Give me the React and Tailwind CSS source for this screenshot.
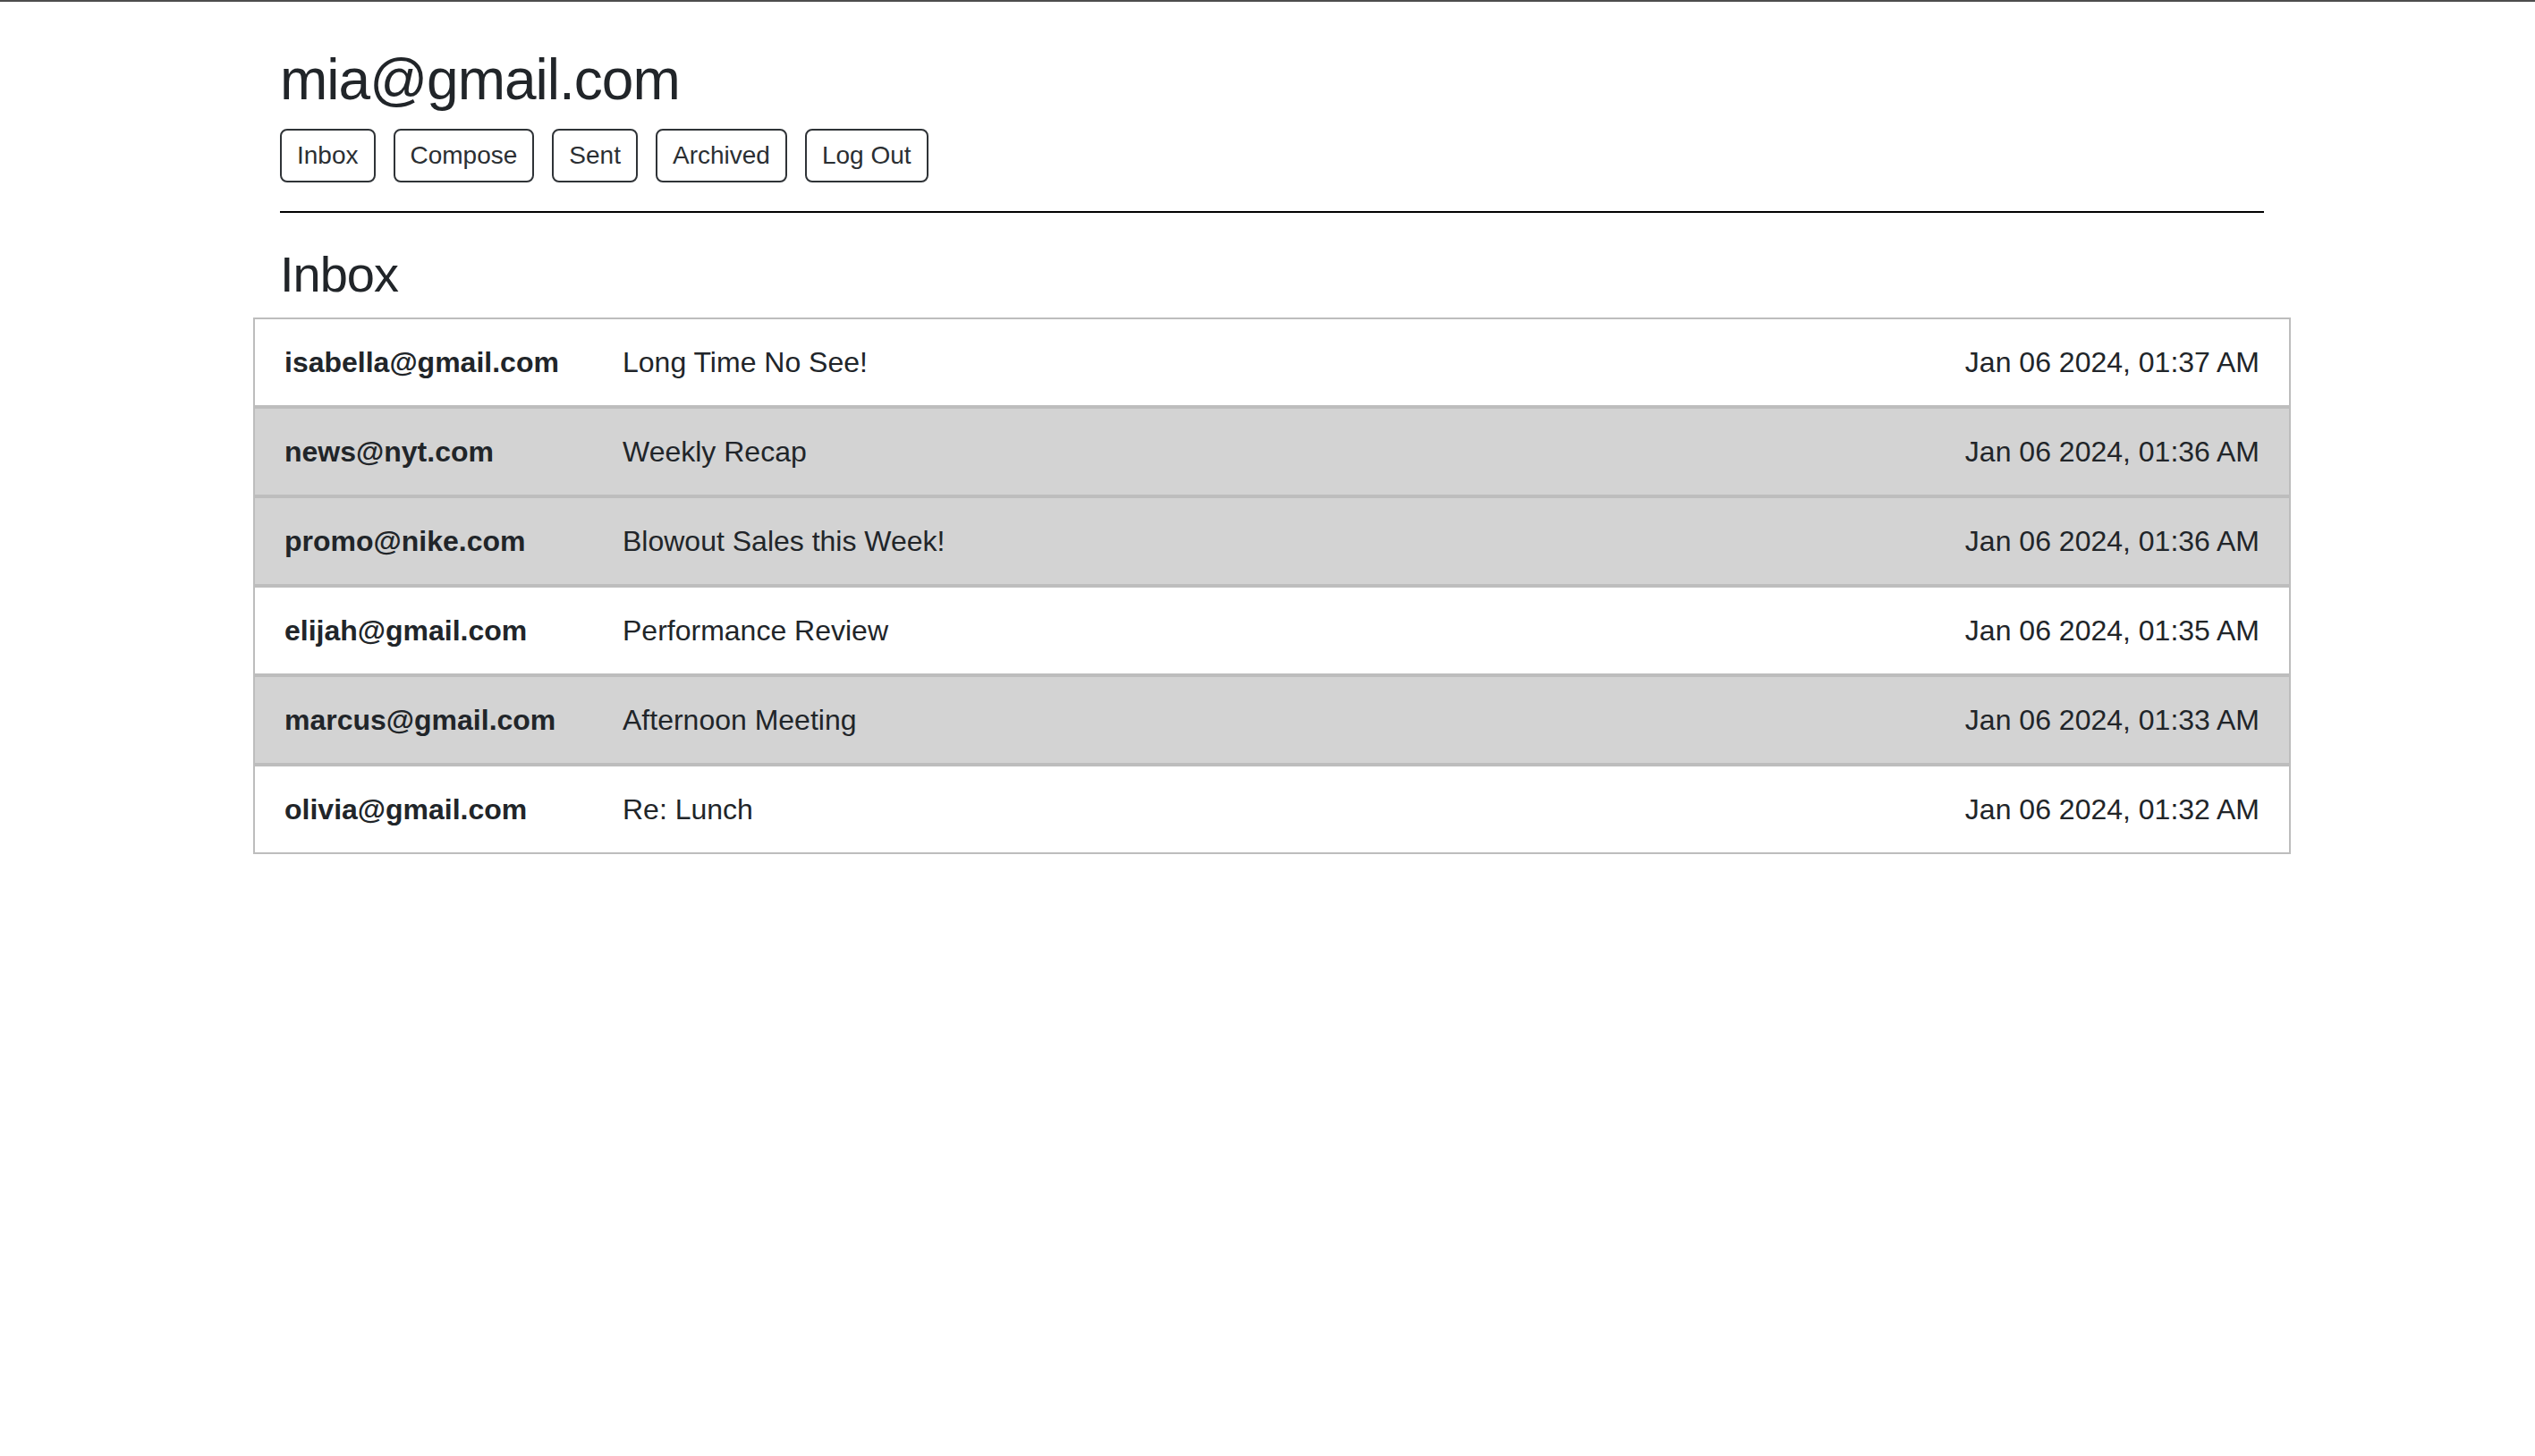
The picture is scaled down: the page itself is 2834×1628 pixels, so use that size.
import React from 'react';

const emails = [
  { id: 1, from: 'isabella@gmail.com', subject: 'Long Time No See!', date: 'Jan 06 2024, 01:37 AM', read: false },
  { id: 2, from: 'news@nyt.com', subject: 'Weekly Recap', date: 'Jan 06 2024, 01:36 AM', read: true },
  { id: 3, from: 'promo@nike.com', subject: 'Blowout Sales this Week!', date: 'Jan 06 2024, 01:36 AM', read: true },
  { id: 4, from: 'elijah@gmail.com', subject: 'Performance Review', date: 'Jan 06 2024, 01:35 AM', read: false },
  { id: 5, from: 'marcus@gmail.com', subject: 'Afternoon Meeting', date: 'Jan 06 2024, 01:33 AM', read: true },
  { id: 6, from: 'olivia@gmail.com', subject: 'Re: Lunch', date: 'Jan 06 2024, 01:32 AM', read: false },
];

const navItems = ['Inbox', 'Compose', 'Sent', 'Archived', 'Log Out'];

const App = () => {
  return (
    <div className="min-h-screen bg-white border-t-2 border-[#4d4d4d] text-[#212529] font-['Liberation_Sans',Arial,sans-serif]">
      <div className="ml-[283px] w-[2278px] pt-[49px]">

        {/* Header */}
        <div className="px-[30px]">
          <h2 className="text-[64px] leading-[77px] tracking-[-1px] mb-[16px]">mia@gmail.com</h2>
          <div className="flex gap-[20px]">
            {navItems.map((item) => (
              <button
                key={item}
                className="h-[60px] px-[17px] flex items-center border-2 border-[#2f3337] rounded-[8px] text-[28px] text-[#2b2f33] bg-white"
              >
                {item}
              </button>
            ))}
          </div>
          <hr className="mt-[32px] border-0 border-t-2 border-black" />
          <h3 className="mt-[35px] mb-[15px] text-[56px] leading-[67px] tracking-[-1px]">Inbox</h3>
        </div>

        {/* Mail list */}
        <div className="border-2 border-[#bdbdbd]">
          {emails.map((e, i) => {
            const last = i === emails.length - 1;
            return (
              <div
                key={e.id}
                className={`flex items-center px-[33px] text-[32px] ${e.read ? 'bg-[#d3d3d3]' : 'bg-white'} ${last ? 'h-[96px]' : 'h-[100px] border-b-4 border-[#bdbdbd]'}`}
              >
                <span className="w-[378px] shrink-0 font-bold">{e.from}</span>
                <span className="flex-1">{e.subject}</span>
                <span>{e.date}</span>
              </div>
            );
          })}
        </div>

      </div>
    </div>
  );
};

export default App;
